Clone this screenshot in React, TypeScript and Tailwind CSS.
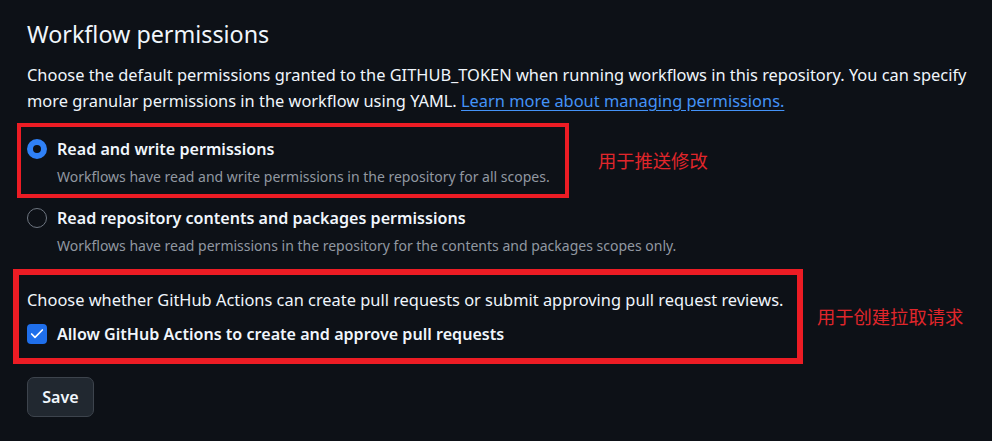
import { Check } from "lucide-react";

function Radio({ checked }: { checked?: boolean }) {
  return checked ? (
    <span className="block size-5 shrink-0 rounded-full border-[6px] border-[#2f81f7] bg-[#0d1117]" />
  ) : (
    <span className="block size-5 shrink-0 rounded-full border-[1.5px] border-[#6e7681] bg-[#0d1117]" />
  );
}

function Option({ checked, label, desc }: { checked?: boolean; label: string; desc: string }) {
  return (
    <div>
      <div className="flex items-center gap-[10px]">
        <Radio checked={checked} />
        <span className="text-[16.1px] leading-6 font-semibold text-[#f0f6fc]">{label}</span>
      </div>
      <p className="mt-[6px] pl-[30px] text-[14px] leading-5 text-[#9198a1]">{desc}</p>
    </div>
  );
}

export default function App() {
  return (
    <div className="min-h-screen bg-[#0d1117] pl-[27px] pt-[18px] font-['Noto_Sans','Noto_Sans_CJK_SC',sans-serif] text-[#f0f6fc]">
      <h2 className="text-[23.3px] leading-8 font-normal">Workflow permissions</h2>
      <p className="mt-3 w-[945px] text-[16.4px] leading-[26px]">
        Choose the default permissions granted to the GITHUB_TOKEN when running workflows in this repository. You can
        specify more granular permissions in the workflow using YAML.{" "}
        <a href="#" className="text-[#4493f8] underline underline-offset-[3px]">
          Learn more about managing permissions.
        </a>
      </p>

      <div className="mt-[9px] flex items-center">
        <div className="-ml-[10px] w-[552px] border-4 border-[#ec1c24] pt-[10px] pr-2 pb-[7px] pl-[6px]">
          <Option
            checked
            label="Read and write permissions"
            desc="Workflows have read and write permissions in the repository for all scopes."
          />
        </div>
        <span className="ml-[29px] text-[18.3px] text-[#e0262b]">用于推送修改</span>
      </div>

      <div className="mt-2">
        <Option
          label="Read repository contents and packages permissions"
          desc="Workflows have read permissions in the repository for the contents and packages scopes only."
        />
      </div>

      <div className="mt-[13px] flex items-center">
        <div className="-ml-[14px] w-[790px] border-[6px] border-[#ec1c24] pt-3 pr-2 pb-3 pl-2">
          <p className="text-[16.4px] leading-[26px]">
            Choose whether GitHub Actions can create pull requests or submit approving pull request reviews.
          </p>
          <label className="mt-[9px] flex items-center gap-[10px]">
            <span className="flex size-5 shrink-0 items-center justify-center rounded-[4px] bg-[#1f6feb]">
              <Check className="size-4 text-white" strokeWidth={2.5} />
            </span>
            <span className="text-[16.1px] leading-6 font-semibold">Allow GitHub Actions to create and approve pull requests</span>
          </label>
        </div>
        <span className="ml-[14px] text-[18.3px] text-[#e0262b]">用于创建拉取请求</span>
      </div>

      <button className="mt-[13px] h-10 w-[67px] rounded-[7px] border border-[#3d444d] bg-[#212830] text-[16.1px] font-semibold text-[#f0f6fc]">
        Save
      </button>
    </div>
  );
}
